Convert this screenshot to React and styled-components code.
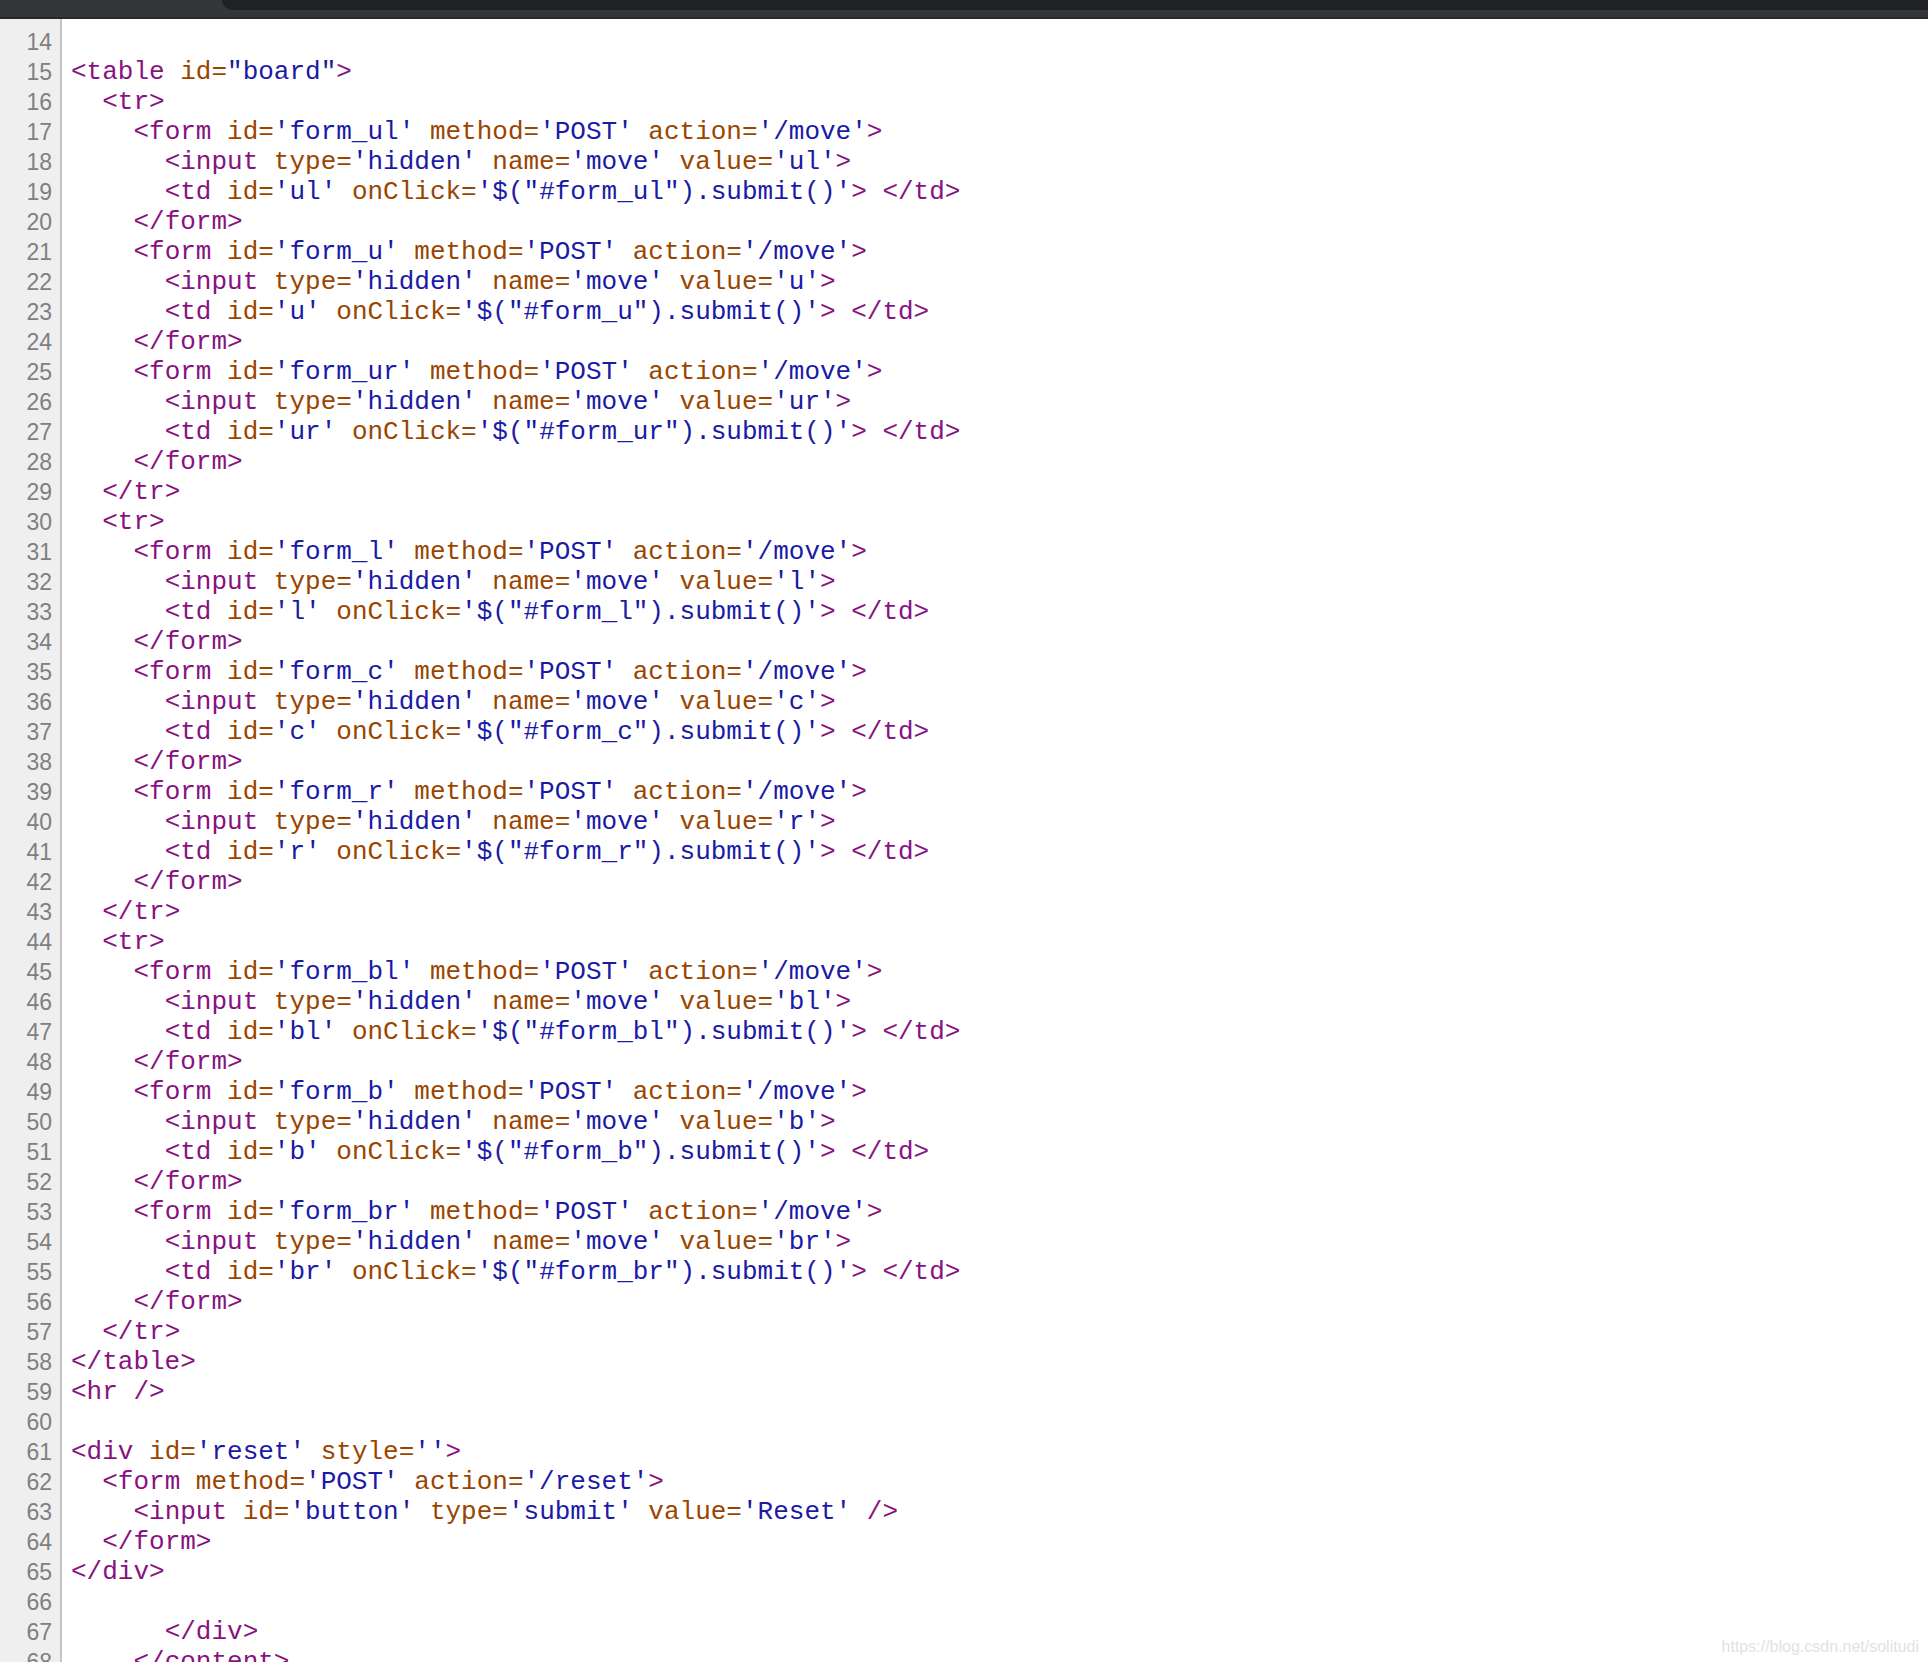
import styled, { createGlobalStyle } from 'styled-components';

const GlobalStyle = createGlobalStyle`
  html, body {
    margin: 0;
    padding: 0;
    background: #ffffff;
  }
  body {
    height: 1662px;
    overflow: hidden;
  }
`;

const cells = [
  ['ul', 'u', 'ur'],
  ['l', 'c', 'r'],
  ['bl', 'b', 'br'],
];

const source = [
  '',
  '<table id="board">',
  ...cells.flatMap((row) => [
    '  <tr>',
    ...row.flatMap((id) => [
      `    <form id='form_${id}' method='POST' action='/move'>`,
      `      <input type='hidden' name='move' value='${id}'>`,
      `      <td id='${id}' onClick='$("#form_${id}").submit()'> </td>`,
      '    </form>',
    ]),
    '  </tr>',
  ]),
  '</table>',
  '<hr />',
  '',
  "<div id='reset' style=''>",
  "  <form method='POST' action='/reset'>",
  "    <input id='button' type='submit' value='Reset' />",
  '  </form>',
  '</div>',
  '',
  '      </div>',
  '    </content>',
];

const FIRST_LINE = 14;

// split one line of markup into coloured pieces
function tokenize(line) {
  const re = /(<\/?\w+)|(\/?>)|(\w+=)|('[^']*'|"[^"]*")/g;
  const out = [];
  let last = 0;
  let m;
  while ((m = re.exec(line))) {
    if (m.index > last) out.push({ kind: 'plain', text: line.slice(last, m.index) });
    const kind = m[1] || m[2] ? 'tag' : m[3] ? 'attr' : 'value';
    out.push({ kind, text: m[0] });
    last = re.lastIndex;
  }
  if (last < line.length) out.push({ kind: 'plain', text: line.slice(last) });
  return out;
}

function App() {
  return (
    <>
      <GlobalStyle />
      <Page>
        <TabStrip>
          <TabRow>
            <TabStub />
            <ActiveTab />
          </TabRow>
          <TabBand />
          <TabEdge />
        </TabStrip>
        <Editor>
          {source.map((line, i) => (
            <Row key={i}>
              <LineNo>{FIRST_LINE + i}</LineNo>
              <Code>
                {tokenize(line).map((t, j) => (
                  <Token key={j} $kind={t.kind}>{t.text}</Token>
                ))}
              </Code>
            </Row>
          ))}
        </Editor>
        <Watermark>https://blog.csdn.net/solitudi</Watermark>
      </Page>
    </>
  );
}

export default App;

const Page = styled.div`
  position: relative;
  width: 1928px;
  height: 1662px;
  overflow: hidden;
  display: flex;
  flex-direction: column;
  background: #ffffff;
`;

const TabStrip = styled.div`
  display: flex;
  flex-direction: column;
  flex-shrink: 0;
`;

const TabRow = styled.div`
  display: flex;
  height: 10px;
  background: #35363a;
`;

const TabStub = styled.div`
  width: 222px;
`;

const ActiveTab = styled.div`
  flex: 1;
  background: #202124;
  border-bottom-left-radius: 14px;
`;

const TabBand = styled.div`
  height: 7px;
  background: #35363a;
`;

const TabEdge = styled.div`
  height: 2px;
  background: #27282b;
`;

const Editor = styled.div`
  flex: 1;
  display: flex;
  flex-direction: column;
  padding-top: 8px;
  background: linear-gradient(to right, #efefef 0, #efefef 60px, #c4c4c4 60px, #c4c4c4 62px, #ffffff 62px);
`;

const Row = styled.div`
  display: flex;
  height: 30px;
  align-items: center;
`;

const LineNo = styled.div`
  width: 60px;
  box-sizing: border-box;
  padding-right: 8px;
  text-align: right;
  font-family: "Liberation Sans", Arial, sans-serif;
  font-size: 23px;
  color: #808080;
  line-height: 30px;
`;

const Code = styled.pre`
  margin: 0 0 0 11px;
  font-family: "Liberation Mono", "Courier New", monospace;
  font-size: 26px;
  line-height: 30px;
  white-space: pre;
  color: #000000;
`;

const tokenColors = {
  tag: '#881280',
  attr: '#994500',
  value: '#1a1aa6',
  plain: '#000000',
};

const Token = styled.span`
  color: ${(p) => tokenColors[p.$kind]};
`;

const Watermark = styled.div`
  position: absolute;
  right: 9px;
  bottom: 6px;
  font-family: "Liberation Sans", Arial, sans-serif;
  font-size: 16px;
  color: #e2e2e2;
`;
